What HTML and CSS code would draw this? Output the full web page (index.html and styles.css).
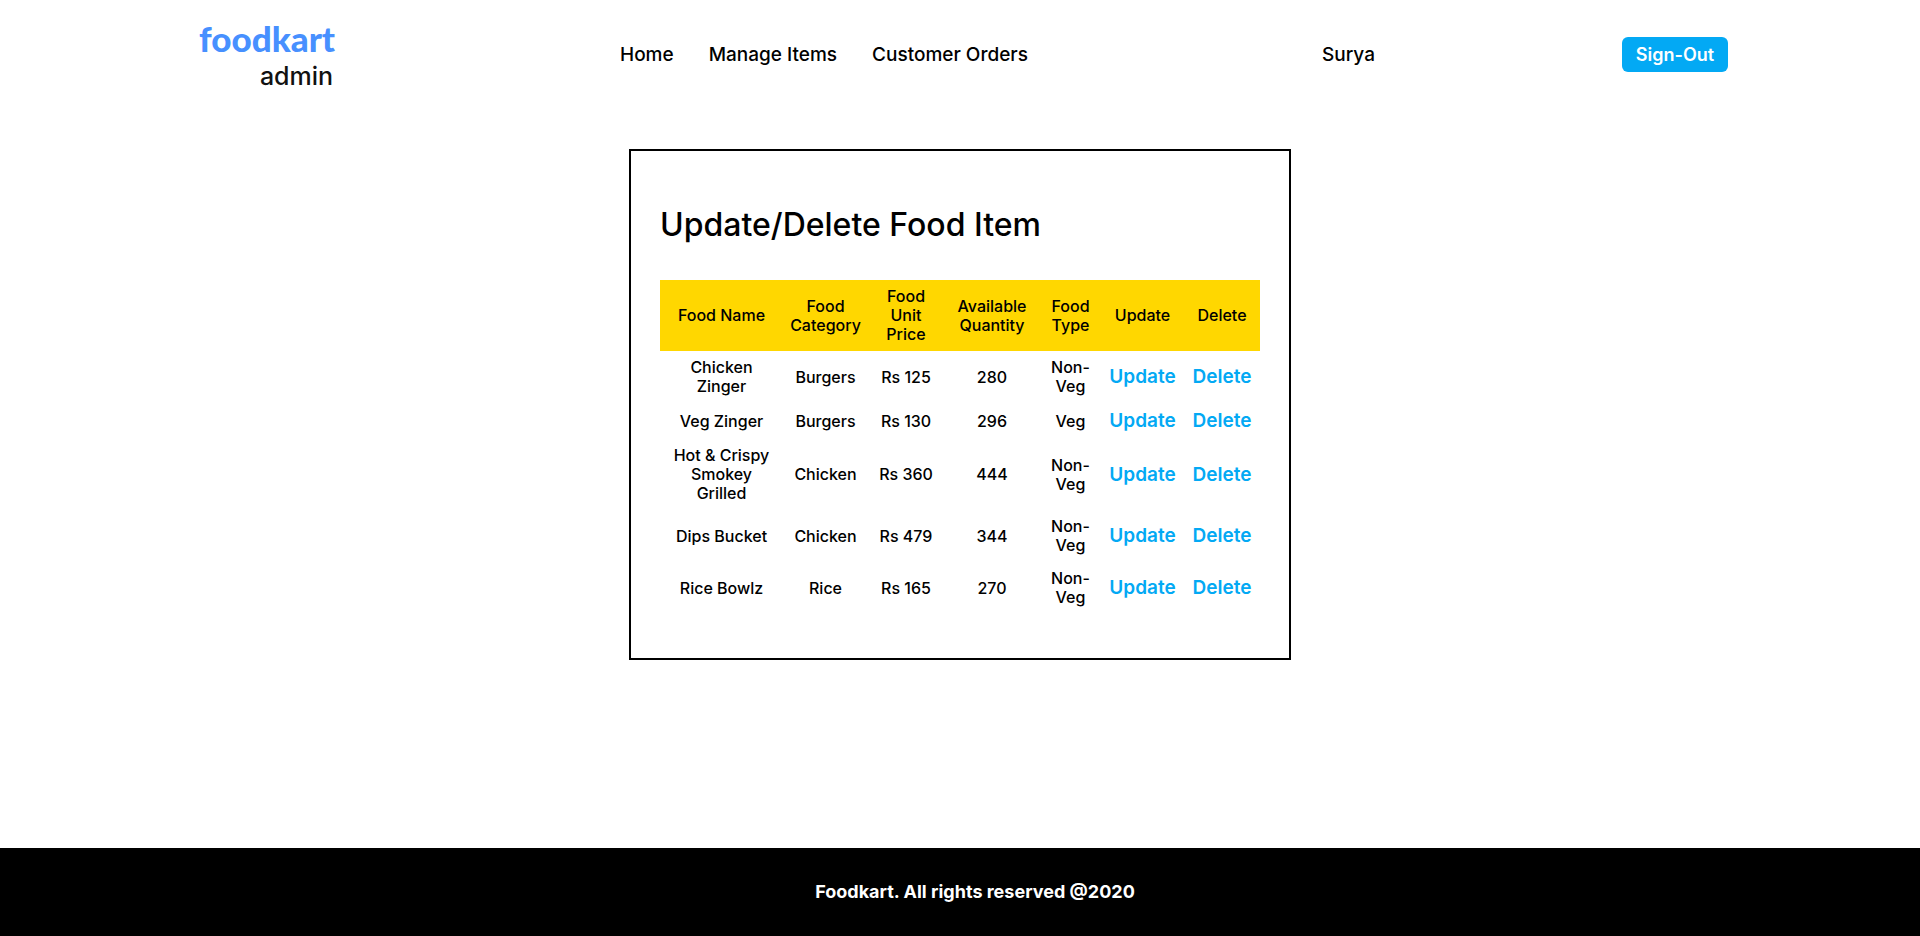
FILE: index.html
```html
<!DOCTYPE html>
<html lang="en">
<head>
<meta charset="utf-8">
<title>Foodkart Admin</title>
<meta name="viewport" content="width=device-width, initial-scale=1">
<link rel="stylesheet" href="styles.css">
</head>
<body>
<header class="header">
  <a class="logo" href="#"><span class="logo-name">foodkart</span><span class="logo-role">admin</span></a>
  <nav class="nav">
    <a href="#">Home</a>
    <a href="#">Manage Items</a>
    <a href="#">Customer Orders</a>
  </nav>
  <span class="user">Surya</span>
  <button class="sign-out" type="button">Sign-Out</button>
</header>
<main class="main">
  <section class="card">
    <h1 class="title">Update/Delete Food Item</h1>
    <table class="items">
      <colgroup>
        <col class="col-name"><col class="col-category"><col class="col-price"><col class="col-quantity"><col class="col-type"><col class="col-update"><col class="col-delete">
      </colgroup>
      <thead>
        <tr><th>Food Name</th><th>Food Category</th><th>Food<br>Unit<br>Price</th><th>Available Quantity</th><th>Food Type</th><th>Update</th><th>Delete</th></tr>
      </thead>
      <tbody>
        <tr><td>Chicken Zinger</td><td>Burgers</td><td>Rs 125</td><td>280</td><td>Non-Veg</td><td><a href="#">Update</a></td><td><a href="#">Delete</a></td></tr>
        <tr><td>Veg Zinger</td><td>Burgers</td><td>Rs 130</td><td>296</td><td>Veg</td><td><a href="#">Update</a></td><td><a href="#">Delete</a></td></tr>
        <tr><td>Hot &amp; Crispy Smokey Grilled</td><td>Chicken</td><td>Rs 360</td><td>444</td><td>Non-Veg</td><td><a href="#">Update</a></td><td><a href="#">Delete</a></td></tr>
        <tr><td>Dips Bucket</td><td>Chicken</td><td>Rs 479</td><td>344</td><td>Non-Veg</td><td><a href="#">Update</a></td><td><a href="#">Delete</a></td></tr>
        <tr><td>Rice Bowlz</td><td>Rice</td><td>Rs 165</td><td>270</td><td>Non-Veg</td><td><a href="#">Update</a></td><td><a href="#">Delete</a></td></tr>
      </tbody>
    </table>
  </section>
</main>
<footer class="footer">Foodkart. All rights reserved @2020</footer>
</body>
</html>
```
FILE: styles.css
```css
* {
  box-sizing: border-box;
}

body {
  display: flex;
  flex-direction: column;
  min-height: 100vh;
  margin: 0;
  background: #fff;
  color: #000;
  font-family: Inter, Montserrat, sans-serif;
  font-size: 19px;
  font-weight: 500;
}

a {
  color: inherit;
  text-decoration: none;
}

.header {
  display: grid;
  grid-template-columns: 428fr 702fr 300fr 106fr;
  align-items: center;
  padding: 16px 10% 0;
}

.logo {
  display: flex;
  flex-direction: column;
  justify-self: start;
  padding-left: 7px;
}

.logo-name {
  color: #4790ff;
  font-family: Lato, sans-serif;
  font-size: 35px;
  font-weight: 900;
  line-height: 44px;
}

.logo-role {
  align-self: flex-end;
  color: #111;
  font-family: Inter, sans-serif;
  font-size: 25px;
  font-weight: 500;
  line-height: 32px;
  padding-right: 2px;
}

.nav {
  display: flex;
  gap: 35px;
}

.sign-out {
  justify-self: end;
  width: 106px;
  height: 35px;
  padding: 0;
  border: 0;
  border-radius: 6px;
  background: #03a9f4;
  color: #fff;
  font: inherit;
  font-size: 18px;
  font-weight: 600;
}

.main {
  display: flex;
  flex: 1;
  justify-content: center;
  align-items: flex-start;
  padding: 57px 20px;
}

.card {
  width: 662px;
  padding: 52px 29px 44px;
  border: 2px solid #000;
}

.title {
  margin: 0 0 33px;
  font-size: 32px;
  font-weight: 500;
  line-height: 44px;
}

.items {
  width: 100%;
  table-layout: fixed;
  border-collapse: collapse;
  text-align: center;
  font-size: 16px;
  line-height: 19px;
}

.items th,
.items td {
  padding: 7px 6px;
  font-weight: 500;
}

.items thead {
  background: #ffd700;
}

.items td a {
  display: block;
  color: #03a9f4;
  font-size: 19px;
  font-weight: 600;
  line-height: 22px;
}

.items td:nth-last-child(-n+2),
.items th:nth-last-child(-n+2) {
  padding-left: 0;
  padding-right: 0;
}

.items td:first-child {
  padding-left: 12px;
  padding-right: 12px;
}

.col-name { width: 123px; }
.col-category { width: 85px; }
.col-price { width: 76px; }
.col-quantity { width: 96px; }
.col-type { width: 61px; }
.col-update { width: 83px; }
.col-delete { width: 76px; }

.footer {
  padding: 30px 0 30px 30px;
  background: #000;
  color: #fff;
  text-align: center;
  font-size: 18px;
  font-weight: 700;
  line-height: 28px;
}
```
